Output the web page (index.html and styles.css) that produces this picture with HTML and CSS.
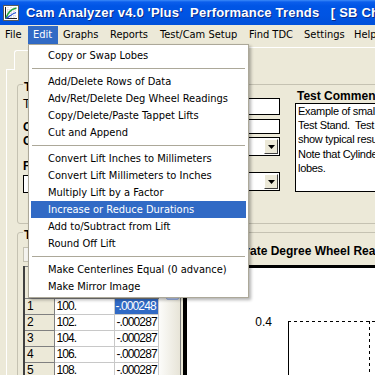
FILE: index.html
```html
<!DOCTYPE html>
<html>
<head>
<meta charset="utf-8">
<title>Cam Analyzer</title>
<link rel="stylesheet" href="styles.css">
</head>
<body>
<div class="win">
  <div class="titlebar">
    <svg class="appicon" viewBox="0 0 16 16" width="16" height="16">
      <rect x="0.5" y="0.5" width="15" height="15" fill="#fff" stroke="#5a5a5a"/>
      <path d="M2 5h12M2 8h12M2 11h12M5 2v12M8 2v12M11 2v12" stroke="#c9c9c9" stroke-width="1" stroke-dasharray="1 1"/>
      <path d="M2.5 2v11.5H14" stroke="#222" fill="none"/>
      <path d="M3 13C5 8 7 4.5 13.5 3" stroke="#1FA33A" stroke-width="1.6" fill="none"/>
      <path d="M3 13.5C6 12 8.5 9 13 7.5" stroke="#2350D8" stroke-width="1.3" fill="none"/>
    </svg>
    <span class="title">Cam Analyzer v4.0 'Plus'  Performance Trends   [ SB Chevy Cam ]</span>
  </div>

  <div class="menubar">
    <span class="mi m-file">File</span>
    <span class="mi m-edit active">Edit</span>
    <span class="mi m-graphs">Graphs</span>
    <span class="mi m-reports">Reports</span>
    <span class="mi m-test">Test/Cam Setup</span>
    <span class="mi m-find">Find TDC</span>
    <span class="mi m-settings">Settings</span>
    <span class="mi m-help">Help</span>
  </div>

  <div class="client">
    <div class="tabs">
      <div class="tgap"></div>
      <div class="tab tab1"></div>
      <div class="tab tab2"></div>
    </div>
    <div class="panel">
      <div class="grp grp1">
        <div class="legend">Test Info</div>
        <div class="g1">
          <div class="colA">
            <div class="l1">Title</div>
            <div class="l2">Cam Mfg</div>
            <div class="l3">Cam Part #</div>
            <div class="l4">Folder</div>
            <div class="abox"></div>
          </div>
          <div class="colB">
            <div class="inp i1"></div>
            <div class="inp i2"></div>
            <div class="inp dd"><div class="ddbtn"><svg width="7" height="4" viewBox="0 0 7 4"><path d="M0 0h7L3.5 4z" fill="#000"/></svg></div></div>
            <div class="inp dd dd2"><div class="ddbtn"><svg width="7" height="4" viewBox="0 0 7 4"><path d="M0 0h7L3.5 4z" fill="#000"/></svg></div></div>
          </div>
          <div class="colC">
            <div class="ch">Test Comment</div>
            <div class="cbox">Example of small block Chevy cam from a
Test Stand.  Test results were modified to
show typical results for the Cam Analyzer.
Note that Cylinder #1 has different
lobes.</div>
          </div>
        </div>
      </div>

      <div class="grp grp2">
        <div class="legend">Test Data</div>
        <div class="g2">
          <div class="lcol">
            <div class="sbox"></div>
            <div class="gridwrap">
              <table class="grid">
                <colgroup><col class="c1"><col class="c2"><col class="c3"></colgroup>
                <tr class="hdr"><td class="rh"></td><td class="rh"></td><td class="rh"></td></tr>
                <tr><td class="rh">1</td><td>100.</td><td class="sel">-.000248</td></tr>
                <tr><td class="rh">2</td><td>102.</td><td>-.000287</td></tr>
                <tr><td class="rh">3</td><td>104.</td><td>-.000287</td></tr>
                <tr><td class="rh">4</td><td>106.</td><td>-.000287</td></tr>
                <tr><td class="rh">5</td><td>108.</td><td>-.000287</td></tr>
              </table>
              <div class="vscroll">
                <div class="sbtn"></div>
                <div class="thumb"></div>
              </div>
            </div>
          </div>
          <div class="rcol">
            <div class="ctitle">Accurate Degree Wheel Readings</div>
            <div class="chart">
              <div class="chart-in">
                <svg class="plot" width="200" height="110" viewBox="0 0 200 110">
                  <text x="85" y="58" text-anchor="end" class="axl">0.4</text>
                  <path d="M101 53.5H200" stroke="#000" stroke-dasharray="3 3"/>
                  <path d="M101.5 53V110" stroke="#000"/>
                  <path d="M182.5 53V110" stroke="#000" stroke-dasharray="3 3"/>
                </svg>
              </div>
            </div>
          </div>
        </div>
      </div>
    </div>
  </div>

  <div class="dropdown">
    <div class="it">Copy or Swap Lobes</div>
    <div class="sep"></div>
    <div class="it">Add/Delete Rows of Data</div>
    <div class="it">Adv/Ret/Delete Deg Wheel Readings</div>
    <div class="it">Copy/Delete/Paste Tappet Lifts</div>
    <div class="it">Cut and Append</div>
    <div class="sep"></div>
    <div class="it">Convert Lift Inches to Millimeters</div>
    <div class="it">Convert Lift Millimeters to Inches</div>
    <div class="it">Multiply Lift by a Factor</div>
    <div class="it hl">Increase or Reduce Durations</div>
    <div class="it">Add to/Subtract from Lift</div>
    <div class="it">Round Off Lift</div>
    <div class="sep"></div>
    <div class="it">Make Centerlines Equal (0 advance)</div>
    <div class="it">Make Mirror Image</div>
  </div>
</div>
</body>
</html>
```

FILE: styles.css
```css
* { box-sizing: border-box; }
html, body { margin: 0; padding: 0; }
body {
  width: 375px; height: 375px; overflow: hidden;
  background: #ECE9D8;
  font-family: "Liberation Sans", Arial, sans-serif;
}
.win { position: relative; width: 375px; height: 375px; overflow: hidden; background: #ECE9D8; }

/* title bar */
.titlebar {
  height: 25px; display: flex; align-items: center; padding-left: 3px;
  background: linear-gradient(#3C8AF8 0, #0B5EEC 2px, #0055E5 6px, #0054E3 60%, #0050DA 100%);
}
.appicon { flex: none; display: block; }
.title {
  margin-left: 7px; color: #fff; white-space: pre; letter-spacing: 0.2px;
  font: bold 13px "Liberation Sans", Arial, sans-serif;
  text-shadow: 1px 1px 0 #0A2A8A;
}

/* menu bar */
.menubar {
  height: 19px; display: flex;
  font: 11px "DejaVu Sans Condensed", "DejaVu Sans", sans-serif; font-stretch: condensed;
  color: #000;
}
.mi { flex: none; padding-left: 5px; line-height: 20px; white-space: nowrap; }
.mi.active { background: linear-gradient(transparent 1px, #316AC5 1px); color: #fff; }
.m-file { width: 28px; }
.m-edit { width: 30px; }
.m-graphs { width: 47px; }
.m-reports { width: 50px; }
.m-test { width: 89px; }
.m-find { width: 54px; }
.m-settings { width: 51px; padding-left: 6px; }
.m-help { width: 30px; }

/* client */
.client { height: 331px; padding-left: 6px; }
.tabs { height: 26px; display: flex; align-items: flex-end; }
.tgap { width: 8px; height: 1px; background: #fff; flex: none; }
.tab { flex: none; border-top: 1px solid #fff; border-left: 1px solid #fff; border-radius: 3px 0 0 0; }
.tab1 { width: 222px; height: 20px; border-right: 1px solid #ACA899; }
.tab2 { width: 200px; height: 23px; }
.panel { height: 305px; border-left: 1px solid #fff; padding: 14px 0 0 10px; }

.grp { width: 420px; border: 1px solid #C5C2B2; border-radius: 3px; }
.grp1 { height: 140px; }
.grp2 { height: 200px; margin-top: 8px; }
.legend {
  display: block; width: max-content; margin: -5px 0 0 5px; padding: 0 1px;
  background: #ECE9D8; font: bold 12px/15px "Liberation Sans", Arial, sans-serif;
}

.g1 { display: flex; align-items: flex-start; padding-left: 5px; }
.colA { width: 176px; flex: none; font: 12px/14px "Liberation Sans", Arial, sans-serif; }
.colA .l1 { margin-top: 2px; }
.colA .l2 { margin-top: 9px; font-weight: bold; }
.colA .l3 { font-weight: bold; }
.colA .l4 { margin-top: 11px; font-weight: bold; }
.abox { margin-top: 2px; height: 18px; width: 150px; background: #fff; border: 1px solid #000; }

.colB { width: 81px; flex: none; }
.inp { background: #fff; border: 1px solid #000; }
.i1 { margin-top: 3px; height: 17px; }
.i2 { margin-top: 4px; height: 15px; }
.dd { margin-top: 3px; height: 19px; display: flex; justify-content: flex-end; align-items: center; padding-right: 1px; }
.dd2 { margin-top: 16px; }
.ddbtn {
  width: 14px; height: 15px; background: #ECE9D8;
  border: 1px solid; border-color: #fff #404040 #404040 #fff;
  display: flex; align-items: center; justify-content: center;
}
.ddbtn svg { display: block; }

.colC { margin-left: 15px; margin-top: -6px; }
.ch { padding-left: 2px; font: bold 12px/14px "Liberation Sans", Arial, sans-serif; }
.cbox {
  width: 200px; height: 89px; background: #fff; border: 1px solid #000;
  padding: 0 2px; white-space: pre; letter-spacing: -0.3px;
  font: 11px/14.2px "Liberation Sans", Arial, sans-serif;
}

/* group 2 */
.g2 { display: flex; align-items: flex-start; padding-left: 5px; }
.lcol { width: 157px; flex: none; }
.sbox { margin-top: 4px; width: 120px; height: 15px; background: #F4F3EE; border: 1px solid #C5C2B2; }
.gridwrap { margin-top: 4px; display: flex; align-items: flex-start; }
.grid {
  border-collapse: collapse; table-layout: fixed; width: 134px; flex: none;
  font: 12px "Liberation Sans", Arial, sans-serif; letter-spacing: -0.9px;
}
.c1 { width: 30px; } .c2 { width: 60px; } .c3 { width: 44px; }
.grid td {
  height: 16px; padding: 0 0 0 2px; line-height: 15px;
  border: 1px solid #C8C8C8; white-space: nowrap; background: #fff;
}
.grid td.rh { background: #ECE9D8; border-color: #808080; }
.grid tr td:first-child { border-left: 2px solid #404040; }
.grid tr.hdr td { height: 32px; }
.grid td.sel { background: #316AC5; color: #fff; padding-left: 1px; }
.vscroll { width: 22px; height: 120px; flex: none; background: linear-gradient(90deg, #FCFCFA, #E6E3D6); }
.sbtn { height: 17px; }
.thumb { margin-left: 7px; width: 13px; height: 17px; background: #C3D3FD; border: 1px solid #9DB5E8; border-radius: 2px; }

.rcol { flex: 1; }
.ctitle { margin-top: 1px; padding-left: 36px; white-space: nowrap; font: bold 12px/15px "Liberation Sans", Arial, sans-serif; }
.chart { margin-top: 6px; border-left: 1px solid #808080; padding-left: 2px; }
.chart-in { height: 120px; background: #fff; border-top: 3px solid #000; border-left: 4px solid #000; }
.plot { display: block; }
.axl { font: 12px "Liberation Sans", Arial, sans-serif; fill: #000; }

/* dropdown menu */
.dropdown {
  position: absolute; left: 28px; top: 44px; width: 221px;
  background: #fff; border: 1px solid #ACA899; padding: 2px;
  box-shadow: 2px 2px 3px rgba(0, 0, 0, 0.3);
  font: 11px "DejaVu Sans Condensed", "DejaVu Sans", sans-serif; font-stretch: condensed;
  color: #000;
}
.it { height: 17px; line-height: 17px; padding-left: 17px; white-space: nowrap; }
.it.hl { background: #316AC5; color: #fff; }
.sep {
  height: 9px;
  background: linear-gradient(#ACA899, #ACA899) no-repeat center / calc(100% - 2px) 1px;
}
```
